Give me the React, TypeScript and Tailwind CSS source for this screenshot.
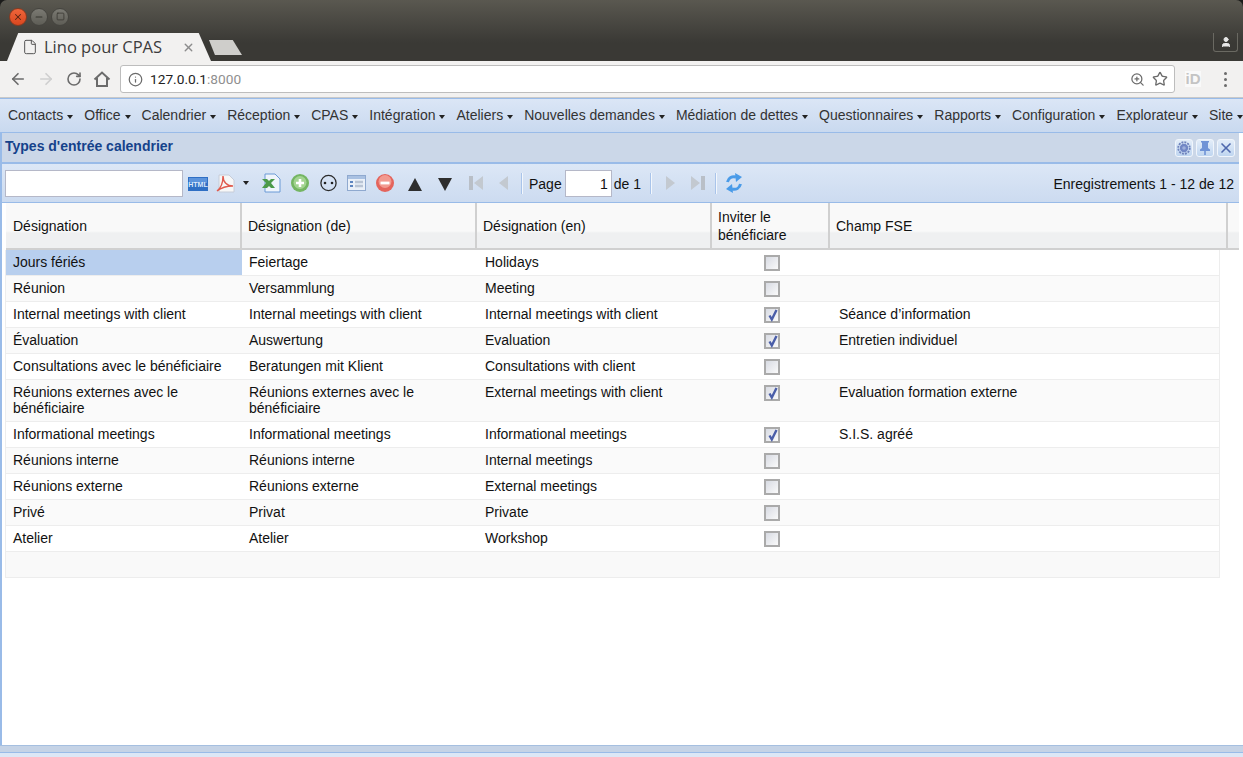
import { ArrowLeft, ArrowRight, RotateCw, Info, ZoomIn, Star, File, X, Minus, Square, User } from 'lucide-react'

const ui = { fontFamily: '"Liberation Sans", Arial, sans-serif' }

const menus = ['Contacts', 'Office', 'Calendrier', 'Réception', 'CPAS', 'Intégration', 'Ateliers', 'Nouvelles demandes', 'Médiation de dettes', 'Questionnaires', 'Rapports', 'Configuration', 'Explorateur', 'Site']

type Row = { fr: string; de: string; en: string; invite: boolean; fse?: string }

const rows: Row[] = [
  { fr: 'Jours fériés', de: 'Feiertage', en: 'Holidays', invite: false },
  { fr: 'Réunion', de: 'Versammlung', en: 'Meeting', invite: false },
  { fr: 'Internal meetings with client', de: 'Internal meetings with client', en: 'Internal meetings with client', invite: true, fse: 'Séance d’information' },
  { fr: 'Évaluation', de: 'Auswertung', en: 'Evaluation', invite: true, fse: 'Entretien individuel' },
  { fr: 'Consultations avec le bénéficiaire', de: 'Beratungen mit Klient', en: 'Consultations with client', invite: false },
  { fr: 'Réunions externes avec le bénéficiaire', de: 'Réunions externes avec le bénéficiaire', en: 'External meetings with client', invite: true, fse: 'Evaluation formation externe' },
  { fr: 'Informational meetings', de: 'Informational meetings', en: 'Informational meetings', invite: true, fse: 'S.I.S. agréé' },
  { fr: 'Réunions interne', de: 'Réunions interne', en: 'Internal meetings', invite: false },
  { fr: 'Réunions externe', de: 'Réunions externe', en: 'External meetings', invite: false },
  { fr: 'Privé', de: 'Privat', en: 'Private', invite: false },
  { fr: 'Atelier', de: 'Atelier', en: 'Workshop', invite: false },
]

function Caret({ className = '' }: { className?: string }) {
  return <span className={`inline-block w-0 h-0 border-x-[3.5px] border-x-transparent border-t-[4px] border-t-[#222] ${className}`} />
}

function Checkbox({ checked }: { checked: boolean }) {
  return (
    <span className="relative block w-[16px] h-[16px] border-2 border-[#aaaaaa] bg-linear-to-br from-[#d8dbe3] to-[#fafafa]">
      {checked && (
        <svg viewBox="0 0 12 12" className="absolute left-0 top-0 w-[12px] h-[12px] overflow-visible">
          <path d="M3.500 6.500 L5.800 10.500 L10.500 1" fill="none" stroke="#4a5ea8" strokeWidth="2.400" />
        </svg>
      )}
    </span>
  )
}

function Sep({ className = '' }: { className?: string }) {
  return <span className={`block w-[2px] h-[21px] bg-[#f3f7fc] border-l border-[#a9c4ea] ${className}`} />
}

function ToolIcon({ className = '', w, children }: { className?: string; w: number; children: React.ReactNode }) {
  return (
    <svg width={w} height={20} viewBox={`0 0 ${w} 20`} className={`block shrink-0 ${className}`}>
      {children}
    </svg>
  )
}

function PanelButton({ children }: { children: React.ReactNode }) {
  return (
    <span className="flex items-center justify-center w-[18px] h-[18px] rounded-[3px] border border-[#f0f5fc] bg-linear-to-b from-[#e3edf9] to-[#bfd5f0]">
      {children}
    </span>
  )
}

export default function App() {
  return (
    <div className="w-[1243px] h-[757px] overflow-hidden flex flex-col bg-[#1b1b1a]" style={ui}>
      {/* window frame */}
      <div className="h-[61px] shrink-0 rounded-t-[7px] bg-linear-to-b from-[#5a5850] to-[#3a3935] to-70% flex flex-col">
        <div className="h-[33px] flex items-center pl-[9px] gap-[3px]">
          <span className="w-[18px] h-[18px] rounded-full bg-linear-to-b from-[#f0653a] to-[#d9471f] border border-[#8a3a20] flex items-center justify-center">
            <X size={10} strokeWidth={2.5} className="text-[#5b2412]" />
          </span>
          <span className="w-[18px] h-[18px] rounded-full bg-linear-to-b from-[#7b7a73] to-[#5e5d56] border border-[#45443f] flex items-center justify-center">
            <Minus size={10} strokeWidth={2.5} className="text-[#35342f]" />
          </span>
          <span className="w-[18px] h-[18px] rounded-full bg-linear-to-b from-[#7b7a73] to-[#5e5d56] border border-[#45443f] flex items-center justify-center">
            <Square size={9} strokeWidth={2} className="text-[#35342f]" />
          </span>
        </div>
        <div className="h-[28px] flex items-start pl-[7px]">
          <div className="w-[204px] h-[28px] bg-[#f2f1f0] [clip-path:polygon(0_100%,5.500%_0,94%_0,100%_100%)] flex items-center pl-[15px] shrink-0">
            <File size={16} strokeWidth={1.5} className="text-[#555]" />
            <span className="ml-[6px] text-[16.500px] text-[#3c3c3c]" style={{ fontFamily: '"Open Sans", sans-serif' }}>Lino pour CPAS</span>
            <X size={13} strokeWidth={2.5} className="ml-[20px] text-[#8c8c8c]" />
          </div>
          <div className="ml-[-2px] mt-[7px] w-[33px] h-[15px] bg-[#cfcecb] [clip-path:polygon(0_0,72%_0,100%_100%,18%_100%)] shrink-0" />
          <div className="ml-auto mr-[5px] w-[25px] h-[19px] rounded-b-[3px] border border-t-0 border-[#6a6962] flex items-center justify-center">
            <User size={12} fill="#e8e8e8" className="text-[#e8e8e8]" />
          </div>
        </div>
      </div>

      {/* browser toolbar */}
      <div className="h-[37px] shrink-0 bg-[#f2f1f0] flex items-center border-b border-[#c9c9c9]">
        <ArrowLeft size={18} strokeWidth={2.2} className="ml-[9px] text-[#6b6b6b]" />
        <ArrowRight size={18} strokeWidth={2.2} className="ml-[10px] text-[#cfcfcf]" />
        <RotateCw size={16} strokeWidth={2.4} className="ml-[11px] text-[#6b6b6b]" />
        <svg width="18" height="18" viewBox="0 0 18 18" className="ml-[11px] shrink-0">
          <path d="M1.500 9.500 L9 2.500 L16.500 9.500 M4 8 V16 H14 V8" fill="none" stroke="#6b6b6b" strokeWidth="2" />
        </svg>
        <div className="ml-[9px] w-[1055px] h-[28px] bg-white rounded-[3px] border border-[#bdbdbd] flex items-center pl-[7px] pr-[6px]">
          <Info size={15} strokeWidth={2} className="text-[#6b6b6b]" />
          <span className="ml-[7px] text-[13.700px] text-[#222]" style={{ fontFamily: 'Roboto, sans-serif' }}>127.0.0.1<span className="text-[#8f8f8f]">:8000</span></span>
          <ZoomIn size={15} strokeWidth={2} className="ml-auto text-[#6b6b6b]" />
          <Star size={16} strokeWidth={2} className="ml-[7px] text-[#6b6b6b]" />
        </div>
        <span className="ml-[10px] w-[16px] h-[16px] flex items-center justify-center bg-[#f9f9f9] text-[15px] font-bold text-[#c4c4c4]">iD</span>
        <span className="ml-[23px] flex flex-col gap-[3px]">
          <span className="w-[3px] h-[3px] rounded-full bg-[#6b6b6b]" />
          <span className="w-[3px] h-[3px] rounded-full bg-[#6b6b6b]" />
          <span className="w-[3px] h-[3px] rounded-full bg-[#6b6b6b]" />
        </span>
      </div>

      {/* app menu */}
      <div className="h-[35px] shrink-0 border-y border-[#99bbe8] bg-linear-to-b from-[#dbe6f6] to-[#c9d9ef] flex items-center gap-[11px] pl-[8px] text-[14px] text-[#333] whitespace-nowrap overflow-hidden">
        {menus.map((label) => (
          <span key={label} className="flex items-center shrink-0">
            {label}
            <Caret className="ml-[4px] mt-[2px]" />
          </span>
        ))}
      </div>

      {/* main panel */}
      <div className="flex-1 min-h-0 bg-white flex flex-col">
        <div className="flex-1 min-h-0 w-[1239px] border-l-2 border-[#99bbe8] flex flex-col">
          <div className="h-[31px] shrink-0 bg-[#cbd7e8] border-b-2 border-[#99bbe8] flex items-start pl-[3px] pr-[4px]">
            <span className="mt-[5px] text-[14px] leading-[16px] font-bold text-[#15428b]">Types d'entrée calendrier</span>
            <div className="ml-auto mt-[6px] flex gap-[3px]">
              <PanelButton>
                <svg width="14" height="14" viewBox="0 0 14 14">
                  <circle cx="7" cy="7" r="5.800" fill="none" stroke="#6f83bd" strokeWidth="1.800" strokeDasharray="2 1" />
                  <circle cx="7" cy="7" r="4.200" fill="#7287c5" />
                  <circle cx="7" cy="7" r="1.800" fill="#9fb0dc" />
                </svg>
              </PanelButton>
              <PanelButton>
                <svg width="12" height="14" viewBox="0 0 12 14"><path d="M2 0h8v1.500H9V7l2 1.500V10H6.800v4H5.200v-4H1V8.500L3 7V1.500H2z" fill="#6f93d6" /></svg>
              </PanelButton>
              <PanelButton>
                <X size={16} strokeWidth={2.5} className="text-[#4f68ad]" />
              </PanelButton>
            </div>
          </div>

          <div className="h-[39px] shrink-0 bg-linear-to-b from-[#dce7f6] to-[#ccdbf0] border-b border-[#99bbe8] flex items-center pl-[3px] pr-[5px] text-[14px] text-[#111]">
            <div className="w-[178px] h-[27px] bg-white border border-[#b5b8c8] shrink-0" />
            <ToolIcon w={20} className="ml-[5px]">
              <rect x="0" y="4" width="20" height="14" fill="#2f6fc4" />
              <rect x="1" y="5" width="18" height="5" fill="#5c94dc" />
              <text x="10" y="14" textAnchor="middle" fontSize="7" fontWeight="bold" fill="#dbe8fb" fontFamily="Liberation Sans">HTML</text>
            </ToolIcon>
            <ToolIcon w={19} className="ml-[8px]">
              <path d="M3 2h10l5 5v12H3z" fill="#f7f7f7" stroke="#c6ccd8" />
              <path d="M1 18c4-3 6-8 6-15 0 6 4 10 10 10-5 0-11 1-16 5z" fill="none" stroke="#e05a4e" strokeWidth="1.400" />
            </ToolIcon>
            <Caret className="ml-[8px]" />
            <ToolIcon w={19} className="ml-[13px]">
              <path d="M3 1h10l5 5v13H3z" fill="#eef4fb" stroke="#6b9ad6" />
              <path d="M0 6h5l2 2 2-2h4l-4 4 4 5h-4l-2-2-2 2H0l4-5z" fill="#4c9a4a" />
            </ToolIcon>
            <ToolIcon w={18} className="ml-[10px]">
              <circle cx="9" cy="10" r="9" fill="#74b562" />
              <circle cx="9" cy="9.500" r="6.500" fill="#a3d492" />
              <path d="M9 6v8M5 10h8" stroke="#fff" strokeWidth="2.600" />
            </ToolIcon>
            <ToolIcon w={17} className="ml-[11px]">
              <circle cx="8.500" cy="10" r="7.600" fill="none" stroke="#2b2b2b" strokeWidth="1.300" />
              <circle cx="5" cy="10" r="1.300" fill="#222" />
              <circle cx="12" cy="10" r="1.300" fill="#222" />
            </ToolIcon>
            <ToolIcon w={19} className="ml-[10px]">
              <rect x="0.500" y="2.500" width="18" height="15" fill="#eaf0f8" stroke="#8fa9cf" />
              <rect x="1" y="3" width="17" height="3" fill="#a9c1e2" />
              <path d="M3 9h3M3 13h3" stroke="#5d85c0" strokeWidth="2" />
              <path d="M8 9h8M8 13h8" stroke="#b9c4d4" strokeWidth="2.500" />
            </ToolIcon>
            <ToolIcon w={18} className="ml-[10px]">
              <circle cx="9" cy="10" r="9" fill="#e4645c" />
              <circle cx="9" cy="8.500" r="6.500" fill="#f29a90" />
              <path d="M4.500 10h9" stroke="#fff" strokeWidth="2.800" />
            </ToolIcon>
            <ToolIcon w={14} className="ml-[14px]">
              <path d="M7 5l7 13H0z" fill="#2e2e2e" />
            </ToolIcon>
            <ToolIcon w={14} className="ml-[16px]">
              <path d="M0 5h14L7 18z" fill="#2e2e2e" />
            </ToolIcon>
            <ToolIcon w={14} className="ml-[17px]">
              <rect x="0" y="3" width="4" height="14" fill="#b9bfc7" />
              <path d="M14 3v14L5 10z" fill="#c3c9d0" />
            </ToolIcon>
            <ToolIcon w={11} className="ml-[15px]">
              <path d="M10 3v14L1 10z" fill="#c3c9d0" />
            </ToolIcon>
            <Sep className="ml-[12px]" />
            <span className="ml-[6px] mt-[2px]">Page</span>
            <div className="ml-[3px] w-[47px] h-[27px] bg-white border border-[#b5b8c8] flex items-center justify-end pt-[2px] pr-[3px] shrink-0">1</div>
            <span className="ml-[2px] mt-[2px]">de 1</span>
            <Sep className="ml-[9px]" />
            <ToolIcon w={11} className="ml-[13px]">
              <path d="M1 3v14l9-7z" fill="#c3c9d0" />
            </ToolIcon>
            <ToolIcon w={14} className="ml-[15px]">
              <path d="M0 3v14l9-7z" fill="#c3c9d0" />
              <rect x="10" y="3" width="4" height="14" fill="#b9bfc7" />
            </ToolIcon>
            <Sep className="ml-[10px]" />
            <ToolIcon w={18} className="ml-[8px]">
              <path d="M2.500 9 C3.500 5 7 3 11 4" fill="none" stroke="#4a9be8" strokeWidth="3" />
              <path d="M10 0 L17 4 L11 9z" fill="#4a9be8" />
              <path d="M15.500 11 C14.500 15 11 17 7 16" fill="none" stroke="#4a9be8" strokeWidth="3" />
              <path d="M8 20 L1 16 L7 11z" fill="#4a9be8" />
            </ToolIcon>
            <span className="ml-auto mt-[2px]">Enregistrements 1 - 12 de 12</span>
          </div>

          <div className="flex-1 min-h-0 pl-[3px] text-[14px] leading-[16px] text-[#111]">
            {/* column header */}
            <div className="h-[47px] ml-[1px] flex border-b-2 border-[#d0d0d0] bg-[linear-gradient(#f9f9f9_0,#f9f9f9_28px,#eff0f1_30px,#eff0f1_100%)]">
              <div className="w-[236px] border-r-2 border-[#d0d0d0] pl-[7px] flex items-center">Désignation</div>
              <div className="w-[235px] border-r-2 border-[#d0d0d0] pl-[6px] flex items-center">Désignation (de)</div>
              <div className="w-[235px] border-r-2 border-[#d0d0d0] pl-[6px] flex items-center">Désignation (en)</div>
              <div className="w-[118px] border-r-2 border-[#d0d0d0] pl-[6px] flex items-center leading-[18px]">Inviter le<br />bénéficiare</div>
              <div className="w-[398px] border-r-2 border-[#d0d0d0] pl-[6px] flex items-center">Champ FSE</div>
            </div>
            {/* rows */}
            <div className="w-[1215px] border-l border-r border-[#ededed]">
              {rows.map((r, i) => (
                <div key={r.fr} className={`grid grid-cols-[236px_236px_236px_118px_388px] border-b border-[#ededed] ${i % 2 ? 'bg-[#fafafa]' : 'bg-white'}`}>
                  <div className={`pl-[7px] pr-[7px] pt-[4px] pb-[5px] ${i === 0 ? 'bg-[#b8cfee]' : ''}`}>{r.fr}</div>
                  <div className="pl-[7px] pr-[7px] pt-[4px] pb-[5px]">{r.de}</div>
                  <div className="pl-[7px] pr-[7px] pt-[4px] pb-[5px]">{r.en}</div>
                  <div className="pl-[50px] pt-[5px]"><Checkbox checked={r.invite} /></div>
                  <div className="pl-[7px] pr-[7px] pt-[4px] pb-[5px]">{r.fse}</div>
                </div>
              ))}
              <div className="h-[26px] bg-[#f9f9f9] border-b border-[#ededed]" />
            </div>
          </div>
        </div>
        <div className="h-[12px] shrink-0 flex flex-col">
          <div className="h-[7px] bg-[#c5d3e6] border-t border-[#a5bfe0]" />
          <div className="h-[5px] bg-[#dce7f6] border-t border-[#99bbe8]" />
        </div>
      </div>
    </div>
  )
}
